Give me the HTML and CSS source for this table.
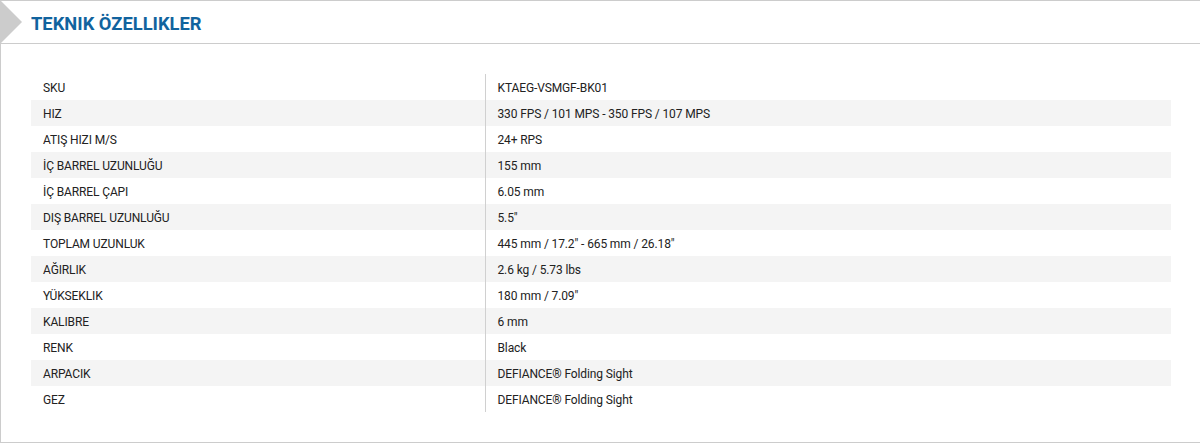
FILE: index.html
```html
<!DOCTYPE html>
<html lang="tr">
<head>
<meta charset="utf-8">
<link rel="stylesheet" href="styles.css">
</head>
<body>
<section class="specs">
  <header class="specs-head">
    <span class="arrow"></span>
    <h2 class="title">TEKNIK ÖZELLIKLER</h2>
  </header>
  <div class="specs-body">
    <table class="spec-table">
      <tr><td class="k">SKU</td><td class="v">KTAEG-VSMGF-BK01</td></tr>
      <tr><td class="k">HIZ</td><td class="v">330 FPS / 101 MPS - 350 FPS / 107 MPS</td></tr>
      <tr><td class="k">ATIŞ HIZI M/S</td><td class="v">24+ RPS</td></tr>
      <tr><td class="k">İÇ BARREL UZUNLUĞU</td><td class="v">155 mm</td></tr>
      <tr><td class="k">İÇ BARREL ÇAPI</td><td class="v">6.05 mm</td></tr>
      <tr><td class="k">DIŞ BARREL UZUNLUĞU</td><td class="v">5.5"</td></tr>
      <tr><td class="k">TOPLAM UZUNLUK</td><td class="v">445 mm / 17.2" - 665 mm / 26.18"</td></tr>
      <tr><td class="k">AĞIRLIK</td><td class="v">2.6 kg / 5.73 lbs</td></tr>
      <tr><td class="k">YÜKSEKLIK</td><td class="v">180 mm / 7.09"</td></tr>
      <tr><td class="k">KALIBRE</td><td class="v">6 mm</td></tr>
      <tr><td class="k">RENK</td><td class="v">Black</td></tr>
      <tr><td class="k">ARPACIK</td><td class="v">DEFIANCE® Folding Sight</td></tr>
      <tr><td class="k">GEZ</td><td class="v">DEFIANCE® Folding Sight</td></tr>
    </table>
  </div>
</section>
</body>
</html>
```
FILE: styles.css
```css
html, body {
  margin: 0;
  padding: 0;
  background: #fff;
}
body {
  font-family: Roboto, "Liberation Sans", sans-serif;
}
.specs {
  width: 1200px;
  height: 443px;
  box-sizing: border-box;
  border: 1px solid #cccccc;
  border-right: none;
}
.specs-head {
  position: relative;
  height: 42px;
  border-bottom: 1px solid #cccccc;
  display: flex;
  align-items: center;
  padding-left: 30px;
}
.arrow {
  position: absolute;
  left: -1px;
  top: -1px;
  width: 0;
  height: 0;
  border-top: 22px solid transparent;
  border-bottom: 22px solid transparent;
  border-left: 22px solid #cccccc;
}
.title {
  margin: 0;
  font-size: 19px;
  font-weight: 700;
  color: #11639e;
  transform: scaleX(0.965);
  transform-origin: left center;
  line-height: 1;
  margin-top: 2px;
}
.specs-body {
  padding: 30px 28px 0 30px;
}
.spec-table {
  width: 1140px;
  border-collapse: collapse;
  font-size: 12px;
  letter-spacing: -0.12px;
  color: #222;
}
.spec-table td {
  height: 26px;
  padding: 0 12px;
  box-sizing: border-box;
  vertical-align: middle;
  line-height: 14px;
  padding-top: 1px;
}
.spec-table tr:nth-child(even) {
  background: #f4f4f4;
}
.spec-table .k {
  width: 454px;
  border-right: 1px solid #d0d0d0;
}
```
